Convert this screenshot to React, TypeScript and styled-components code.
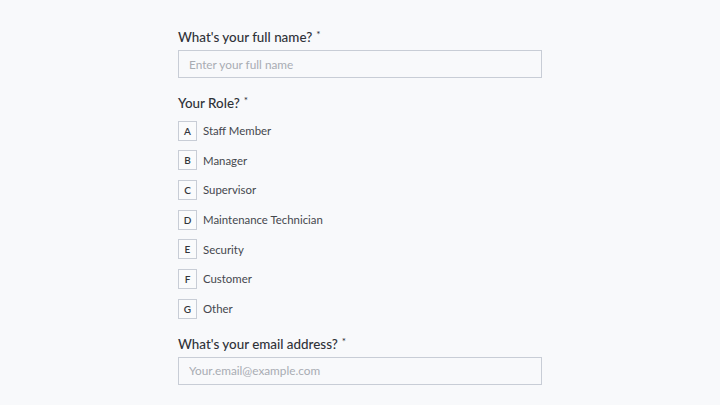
import React from "react";
import styled, { createGlobalStyle } from "styled-components";

const Global = createGlobalStyle`
  html, body {
    margin: 0;
    padding: 0;
    background: #f8f9fb;
  }
  body {
    font-family: "Lato", "Open Sans", sans-serif;
    color: #33363b;
  }
  * { box-sizing: border-box; }
`;

const Form = styled.form`
  width: 364px;
  margin-left: 178px;
  padding-top: 28px;
  display: flex;
  flex-direction: column;
`;

const Field = styled.div`
  display: flex;
  flex-direction: column;
  margin-bottom: 16px;
`;

const Label = styled.label`
  font-size: 13.4px;
  line-height: 18px;
  height: 18px;
  font-weight: 500;
  color: #2f3238;
  margin-bottom: 4px;
`;

const Required = styled.sup`
  font-size: 10px;
  margin-left: 4px;
  vertical-align: 4px;
  line-height: 0;
`;

const TextInput = styled.input`
  height: 28px;
  width: 100%;
  border: 1px solid #c8cdd6;
  background: #f8f9fb;
  padding: 0 10px;
  font-family: inherit;
  font-size: 11.8px;
  color: #33363b;
  outline: none;
  &::placeholder {
    color: #a8acb3;
  }
`;

const Options = styled.div`
  display: flex;
  flex-direction: column;
  gap: 9.7px;
  margin-top: 4.5px;
`;

const Option = styled.div`
  display: flex;
  align-items: center;
  gap: 6px;
  height: 20px;
  cursor: pointer;
`;

const Key = styled.span`
  width: 19px;
  height: 20px;
  border: 1px solid #c8cdd6;
  background: #fafbfc;
  display: flex;
  align-items: center;
  justify-content: center;
  font-size: 10px;
  font-weight: 600;
  color: #33363b;
`;

const OptionText = styled.span`
  font-size: 11.4px;
  color: #45484e;
`;

const roles = [
  "Staff Member",
  "Manager",
  "Supervisor",
  "Maintenance Technician",
  "Security",
  "Customer",
  "Other",
];

export default function App() {
  return (
    <>
      <Global />
      <Form onSubmit={(e) => e.preventDefault()}>
        <Field>
          <Label>
            What's your full name?<Required>*</Required>
          </Label>
          <TextInput placeholder="Enter your full name" />
        </Field>
        <Field>
          <Label>
            Your Role?<Required>*</Required>
          </Label>
          <Options>
            {roles.map((r, i) => (
              <Option key={r}>
                <Key>{String.fromCharCode(65 + i)}</Key>
                <OptionText>{r}</OptionText>
              </Option>
            ))}
          </Options>
        </Field>
        <Field>
          <Label>
            What's your email address?<Required>*</Required>
          </Label>
          <TextInput placeholder="Your.email@example.com" />
        </Field>
      </Form>
    </>
  );
}
